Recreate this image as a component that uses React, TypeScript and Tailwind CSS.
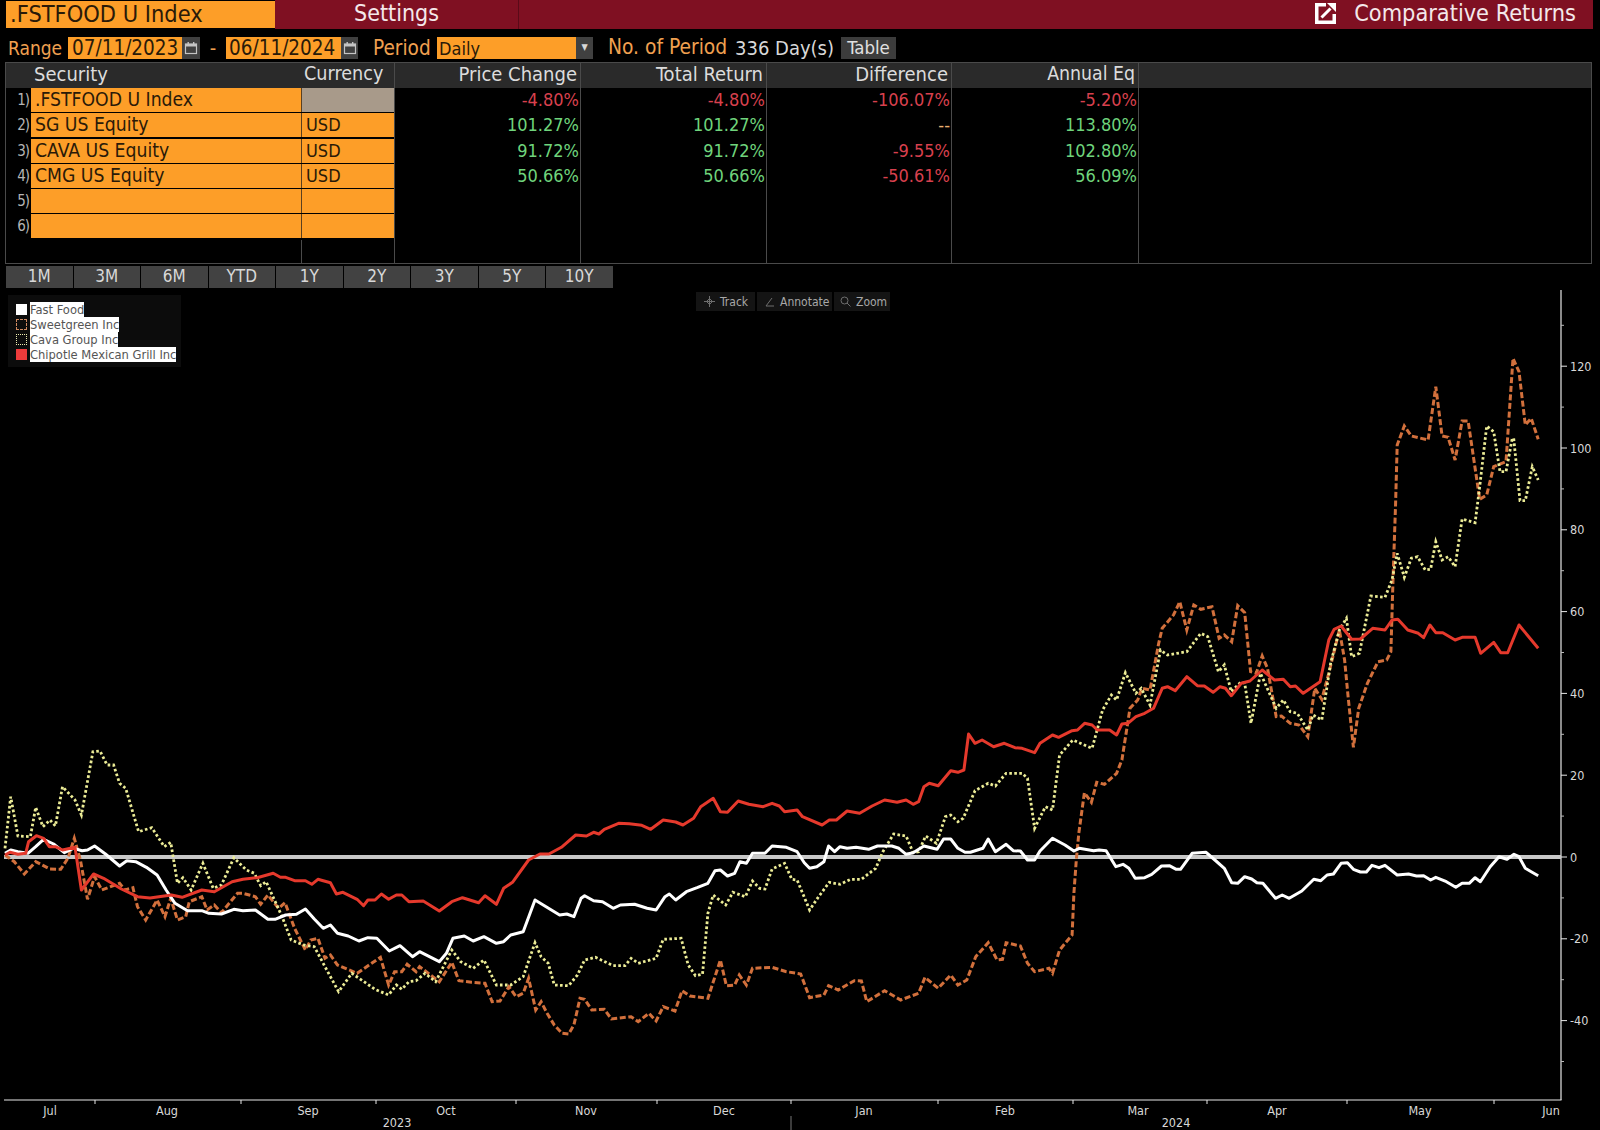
const FONT = "font-['DejaVu_Sans_Condensed','DejaVu_Sans',sans-serif]";

type Pt = [number, number];

// traced from the chart, each list in its own crop's units
const fromA = (pts: number[][]): Pt[] => pts.map(([x, y]) => [x / 2.8, 720 + y / 3]);
const fromB = (pts: number[][]): Pt[] => pts.map(([x, y]) => [540 + x / 2.8, 720 + y / 3]);
const fromC = (pts: number[][]): Pt[] => pts.map(([x, y]) => [1050 + x / 2.851, 340 + y / 3]);
const fromD = (pts: number[][]): Pt[] => pts.map(([x, y]) => [1050 + x / 2.851, 760 + y / 3]);

const WHITE: Pt[] = [
  ...fromA([[14,400],[30,390],[50,395],[78,400],[100,380],[122,358],[150,372],[180,398],[205,385],[230,392],[245,390],[265,378],[295,402],[335,438],[355,422],[380,425],[410,442],[440,465],[465,510],[490,550],[525,572],[565,572],[585,580],[620,582],[655,568],[680,572],[715,570],[750,598],[770,598],[800,585],[830,583],[855,567],[880,597],[905,625],[925,615],[945,640],[975,648],[1005,663],[1030,653],[1055,655],[1090,693],[1120,677],[1155,710],[1175,695],[1230,725],[1250,700],[1268,655],[1300,648],[1325,663],[1355,650],[1390,670],[1410,665],[1430,645],[1465,635],[1498,540]]),
  ...fromB([[55,585],[75,582],[95,590],[115,535],[125,527],[150,542],[175,545],[205,565],[225,555],[265,553],[300,565],[325,570],[350,530],[362,522],[380,540],[410,515],[440,503],[470,490],[490,452],[505,450],[525,468],[545,460],[560,425],[578,430],[595,400],[630,400],[650,378],[690,382],[720,395],[740,428],[755,445],[775,440],[795,425],[808,378],[825,395],[840,380],[860,385],[885,382],[920,388],[945,378],[985,378],[1005,385],[1025,403],[1045,398],[1075,378],[1112,388],[1130,357],[1150,357],[1170,385],[1190,397],[1205,397],[1240,385],[1255,357],[1275,395],[1305,373],[1325,392],[1345,393],[1365,420],[1385,420],[1400,393],[1435,355],[1470,375],[1495,393],[1510,385],[1550,392]]),
  ...fromD([[140,270],[160,272],[188,320],[208,313],[225,325],[243,355],[270,353],[290,343],[318,318],[340,317],[360,328],[372,328],[405,280],[445,277],[470,300],[497,325],[518,368],[535,370],[555,350],[575,357],[590,368],[607,370],[643,415],[662,405],[682,415],[718,393],[752,358],[772,362],[790,345],[808,342],[830,310],[848,308],[865,328],[885,336],[902,336],[918,316],[938,323],[955,316],[990,345],[1022,342],[1045,348],[1065,347],[1085,360],[1100,352],[1130,365],[1157,382],[1175,370],[1195,370],[1212,353],[1227,365],[1255,320],[1280,290],[1303,298],[1323,283],[1337,290],[1355,325],[1372,335],[1392,347]]),
];

const RED: Pt[] = [
  ...fromA([[14,405],[28,397],[50,403],[72,400],[80,365],[102,347],[122,355],[138,380],[155,380],[175,390],[210,382],[228,510],[262,462],[290,475],[340,507],[385,530],[420,534],[480,525],[510,532],[565,510],[600,515],[650,485],[680,478],[720,473],[765,460],[785,472],[800,472],[825,482],[855,482],[873,493],[890,478],[925,488],[942,522],[960,517],[1000,538],[1018,557],[1030,540],[1050,540],[1068,522],[1088,538],[1110,525],[1125,525],[1145,545],[1185,543],[1230,573],[1265,545],[1295,533],[1340,548],[1358,527],[1390,553],[1410,505],[1435,487],[1480,420]]),
  ...fromB([[0,402],[25,402],[60,382],[100,345],[130,348],[150,337],[165,342],[180,328],[220,310],[250,311],[285,316],[310,328],[345,300],[380,306],[400,315],[430,295],[450,260],[485,235],[505,275],[525,277],[555,243],[585,253],[625,260],[650,250],[670,258],[685,275],[720,270],[735,290],[790,315],[810,300],[830,300],[860,273],[895,280],[930,258],[965,240],[1000,247],[1025,240],[1045,253],[1060,245],[1075,200],[1090,190],[1115,197],[1150,152],[1170,157],[1187,150],[1200,42],[1218,70],[1238,60],[1270,80],[1300,70],[1330,83],[1350,85],[1385,98],[1400,70],[1435,45],[1452,52],[1490,32],[1505,30],[1525,10]]),
  ...fromC([[120,1155],[135,1170],[170,1170],[190,1185],[205,1152],[222,1150],[245,1130],[270,1120],[295,1105],[320,1045],[335,1040],[357,1052],[390,1010],[420,1037],[440,1038],[465,1057],[485,1040],[500,1045],[517,1067],[545,1030],[570,1023],[605,990],[640,1020],[665,1018],[685,1040],[700,1038],[722,1060],[770,1025],[795,900],[810,868],[830,858],[860,898],[885,897],[920,865],[955,870],[975,840],[992,838],[1020,870],[1050,880],[1065,893],[1083,855],[1100,878],[1120,878],[1155,900],[1175,892],[1212,892],[1228,940],[1265,907],[1285,938],[1305,938],[1337,855],[1392,925]]),
];

const ORANGE: Pt[] = [
  ...fromA([[14,405],[40,425],[68,462],[100,425],[140,447],[170,448],[190,415],[208,355],[225,420],[245,538],[265,470],[285,510],[335,490],[350,510],[372,503],[385,560],[408,600],[440,540],[462,590],[478,535],[497,600],[520,590],[530,545],[565,530],[580,570],[600,555],[620,578],[665,520],[680,520],[715,530],[730,553],[750,525],[780,565],[798,548],[825,625],[855,690],[870,660],[890,655],[910,715],[925,705],[945,735],[1000,760],[1065,712],[1088,795],[1105,755],[1125,755],[1140,733],[1165,755],[1175,740],[1230,785],[1265,727],[1285,782],[1320,787],[1358,790],[1378,845],[1400,843],[1425,800],[1445,830],[1465,820],[1480,775],[1500,870],[1515,845]]),
  ...fromB([[20,880],[40,915],[62,940],[80,942],[95,915],[112,835],[125,838],[145,870],[180,868],[200,897],[255,890],[275,905],[305,880],[325,903],[345,860],[378,873],[398,812],[420,828],[470,835],[505,720],[522,797],[545,795],[558,765],[578,795],[595,745],[650,742],[690,755],[730,762],[755,833],[795,825],[808,797],[835,810],[880,782],[900,783],[915,845],[965,812],[1010,840],[1060,820],[1078,772],[1115,805],[1150,765],[1170,795],[1195,780],[1220,710],[1255,668],[1280,720],[1295,718],[1305,668],[1345,678],[1365,730],[1385,755],[1425,745],[1435,760],[1455,690],[1490,645]]),
  ...fromD([[68,400],[75,300],[82,220],[98,98],[118,127],[133,67],[155,73],[190,40],[205,0]]),
  ...fromC([[228,1105],[250,1080],[262,1045],[285,1050],[310,910],[320,865],[352,825],[370,785],[390,870],[410,795],[430,808],[462,800],[482,895],[497,885],[518,905],[535,797],[555,818],[572,995],[588,1000],[605,948],[620,985],[645,1130],[660,1128],[685,1150],[710,1155],[735,1190],[755,1045],[775,1078],[795,1000],[825,870],[840,960],[850,1070],[865,1222],[880,1105],[905,1030],[935,965],[960,960],[972,935],[978,720],[985,500],[990,315],[1010,258],[1030,288],[1078,300],[1100,140],[1118,288],[1135,292],[1155,360],[1175,243],[1192,243],[1225,478],[1245,465],[1265,380],[1300,365],[1320,55],[1337,95],[1355,255],[1372,235],[1392,298]]),
];

const YELLOW: Pt[] = [
  ...fromA([[14,385],[30,230],[50,348],[85,350],[100,262],[120,320],[140,300],[155,318],[175,200],[210,240],[228,285],[260,95],[280,93],[300,135],[318,135],[335,190],[352,205],[388,335],[425,323],[460,380],[478,367],[497,490],[512,473],[535,510],[568,430],[597,505],[620,495],[655,413],[690,450],[712,460],[730,497],[745,485],[790,590],[815,660],[850,675],[880,680],[910,740],[948,815],[985,760],[1050,808],[1088,825],[1110,795],[1125,808],[1145,785],[1165,782],[1190,760],[1220,785],[1265,690],[1290,725],[1325,745],[1355,720],[1390,795],[1430,795],[1465,770],[1498,668],[1515,710],[1535,730],[1552,795]]),
  ...fromB([[40,795],[80,797],[105,765],[125,720],[155,712],[205,737],[238,737],[255,715],[275,730],[325,715],[345,658],[395,655],[415,735],[435,767],[455,763],[470,580],[485,525],[520,555],[540,517],[575,530],[595,483],[615,505],[630,507],[650,447],[685,430],[705,478],[720,480],[755,570],[780,530],[810,487],[840,493],[870,478],[900,478],[940,445],[960,395],[990,342],[1025,348],[1045,398],[1060,395],[1080,348],[1110,370],[1135,290],[1150,285],[1170,305],[1185,295],[1218,212],[1255,190],[1275,198],[1305,160],[1350,160],[1365,175],[1385,325],[1415,260],[1435,270],[1455,105]]),
  ...fromC([[65,1200],[120,1225],[150,1110],[175,1065],[190,1080],[215,998],[245,1060],[260,1045],[285,1095],[315,930],[335,945],[390,935],[430,880],[450,890],[480,995],[497,975],[517,1055],[545,1025],[555,1030],[573,1150],[600,1000],[645,1105],[665,1080],[685,1115],[705,1120],[735,1170],[750,1125],[775,1140],[800,970],[825,870],[845,835],[860,950],[882,940],[915,768],[955,772],[975,720],[990,640],[1010,712],[1030,655],[1048,650],[1070,690],[1085,688],[1100,605],[1118,660],[1135,650],[1155,680],[1175,537],[1212,548],[1225,440],[1245,258],[1265,275],[1283,395],[1300,395],[1318,295],[1322,295],[1340,482],[1355,482],[1375,380],[1392,420]]),
];

const CHART_TOP = 290;
const toLine = (pts: Pt[]) => pts.map(([x, y]) => `${x.toFixed(1)},${(y - CHART_TOP).toFixed(1)}`).join(' ');
const yOf = (v: number) => 857 - CHART_TOP - v * 4.09;

const MONTHS: [string, number][] = [
  ['Jul', 50], ['Aug', 167], ['Sep', 308], ['Oct', 446], ['Nov', 586], ['Dec', 724],
  ['Jan', 864], ['Feb', 1005], ['Mar', 1138], ['Apr', 1277], ['May', 1420], ['Jun', 1551],
];
const X_TICKS = [95, 241, 376, 516, 657, 791, 938, 1073, 1207, 1347, 1494];
const Y_LABELS = [120, 100, 80, 60, 40, 20, 0, -20, -40];
const Y_MINOR = [130, 110, 90, 70, 50, 30, 10, -10, -30, -50];

const ROWS = [
  { n: '1)', sec: '.FSTFOOD U Index', cur: '', price: '-4.80%', total: '-4.80%', diff: '-106.07%', eq: '-5.20%' },
  { n: '2)', sec: 'SG US Equity', cur: 'USD', price: '101.27%', total: '101.27%', diff: '--', eq: '113.80%' },
  { n: '3)', sec: 'CAVA US Equity', cur: 'USD', price: '91.72%', total: '91.72%', diff: '-9.55%', eq: '102.80%' },
  { n: '4)', sec: 'CMG US Equity', cur: 'USD', price: '50.66%', total: '50.66%', diff: '-50.61%', eq: '56.09%' },
  { n: '5)', sec: '', cur: '', price: '', total: '', diff: '', eq: '' },
  { n: '6)', sec: '', cur: '', price: '', total: '', diff: '', eq: '' },
];

const RANGES = ['1M', '3M', '6M', 'YTD', '1Y', '2Y', '3Y', '5Y', '10Y'];

const LEGEND = [
  { label: 'Fast Food', swatch: 'bg-white' },
  { label: 'Sweetgreen Inc', swatch: 'border border-dashed border-[#d08a60]' },
  { label: 'Cava Group Inc', swatch: 'border border-dotted border-[#eeeeb0]' },
  { label: 'Chipotle Mexican Grill Inc', swatch: 'bg-[#ee3b3b]' },
];

function valueColor(v: string) {
  if (v === '--') return 'text-[#e8b070]';
  return v.startsWith('-') ? 'text-[#d8404e]' : 'text-[#6fd47c]';
}

function CalendarButton({ width }: { width: string }) {
  return (
    <div className={`flex h-full items-center justify-center bg-[#404040] ${width}`}>
      <svg width="14" height="14" viewBox="0 0 14 14">
        <rect x="1.5" y="3" width="11" height="9.5" fill="none" stroke="#c4c4c4" strokeWidth="1.2" />
        <rect x="1.5" y="3" width="11" height="2.5" fill="#c4c4c4" />
        <rect x="3.5" y="1" width="1.4" height="2.5" fill="#c4c4c4" />
        <rect x="9" y="1" width="1.4" height="2.5" fill="#c4c4c4" />
      </svg>
    </div>
  );
}

function HeaderBar() {
  return (
    <div className="flex h-[29px] pl-[6px] pr-[7px]">
      <div className="mt-px flex h-[27px] w-[269px] items-center bg-[#fd9e28] pl-1 text-[23.4px] text-[#2a1a08]">
        .FSTFOOD U Index
      </div>
      <div className="flex flex-1 items-center bg-[#7f1022] text-[#f4e8ea]">
        <div className="flex h-full w-[244px] items-center justify-center border-r border-[#5a0a18] pb-[2px] text-[23px]">
          Settings
        </div>
        <div className="flex flex-1 items-center justify-end gap-[18px] pb-[2px] pr-[17px] text-[23.3px]">
          <svg width="21" height="21" viewBox="0 0 21 21" fill="none" stroke="#ffffff">
            <path d="M11 1.75H1.75V19.25H19.25V11" strokeWidth="3.5" />
            <path d="M6.5 14.5L15.5 5.5" strokeWidth="3" />
            <path d="M12 0H21V9Z" fill="#ffffff" stroke="none" />
          </svg>
          Comparative Returns
        </div>
      </div>
    </div>
  );
}

function RangeBar() {
  return (
    <div className="mt-[8px] flex h-[22px] items-center pl-[8px] text-[20px] text-[#f0a050]">
      <span className="w-[60px] text-[19px]">Range</span>
      <div className="flex h-full items-center">
        <div className="flex h-full w-[114px] items-center bg-[#fd9e28] pl-[4px] text-[20.5px] text-[#2a1a08]">07/11/2023</div>
        <CalendarButton width="w-[18px]" />
      </div>
      <span className="w-[26px] text-center">-</span>
      <div className="flex h-full items-center">
        <div className="flex h-full w-[115px] items-center bg-[#fd9e28] pl-[3px] text-[20.5px] text-[#2a1a08]">06/11/2024</div>
        <CalendarButton width="w-[17px]" />
      </div>
      <span className="ml-[15px] w-[64px] text-[20.6px]">Period</span>
      <div className="flex h-full w-[139px] items-center bg-[#fd9e28] pl-[2px] text-[18px] text-[#2a1a08]">Daily</div>
      <div className="flex h-full w-[17px] items-center justify-center bg-[#404040] text-[9px] text-[#d8d8d8]">▼</div>
      <span className="ml-[15px] w-[120px] whitespace-nowrap text-[20.8px]">No. of Period</span>
      <span className="w-[113px] whitespace-nowrap pl-[7px] text-[#d8d8d8]">336 Day(s)</span>
      <div className="flex h-full w-[55px] items-center justify-center bg-[#3c3c3c] text-[18.5px] text-[#e0e0e0]">Table</div>
    </div>
  );
}

function NumCell({ value, className }: { value: string; className: string }) {
  return <div className={`pr-[1px] text-right leading-[23px] ${className} ${valueColor(value)}`}>{value}</div>;
}

function ComparisonTable() {
  return (
    <div className="ml-[5px] mr-[8px] mt-[3px] flex h-[202px] flex-col border border-[#4a4a4a] text-[18px]">
      <div className="flex h-[25px] shrink-0 bg-[#2a2a2a] text-[20px] leading-[22px] text-[#dcdcdc]">
        <div className="w-[25px]" />
        <div className="w-[270px] pl-[3px]">Security</div>
        <div className="w-[94px] border-r border-[#4a4a4a] pl-[3px] text-[19.6px]">Currency</div>
        <div className="w-[186px] border-r border-[#4a4a4a] pr-[3px] text-right">Price Change</div>
        <div className="w-[186px] border-r border-[#4a4a4a] pr-[3px] text-right">Total Return</div>
        <div className="w-[185px] border-r border-[#4a4a4a] pr-[3px] text-right">Difference</div>
        <div className="w-[187px] border-r border-[#4a4a4a] pr-[3px] text-right text-[19.3px]">Annual Eq</div>
        <div className="flex-1" />
      </div>
      <div className="flex flex-1 flex-col">
        {ROWS.map((r, i) => (
          <div key={r.n} className="flex h-[25.3px] shrink-0 leading-[24px]">
            <div className="w-[25px] pr-[2px] text-right text-[15px] tracking-[-1px] text-[#b4b4b4]">{r.n}</div>
            <div className="h-[24px] w-[270px] whitespace-nowrap bg-[#fd9e28] pl-[4px] text-[19.2px] leading-[23px] text-[#2a1a08]">{r.sec}</div>
            <div
              className={`h-[24px] w-[93px] border-l border-[#5a4020] pl-[4px] leading-[23px] text-[#2a1a08] ${i === 0 ? 'bg-[#a89a8a]' : 'bg-[#fd9e28]'}`}
            >
              {r.cur}
            </div>
            <div className="w-px bg-[#4a4a4a]" />
            <NumCell value={r.price} className="w-[186px] border-r border-[#4a4a4a]" />
            <NumCell value={r.total} className="w-[186px] border-r border-[#4a4a4a]" />
            <NumCell value={r.diff} className="w-[185px] border-r border-[#4a4a4a]" />
            <NumCell value={r.eq} className="w-[187px] border-r border-[#4a4a4a]" />
          </div>
        ))}
        <div className="flex flex-1">
          <div className="w-[25px]" />
          <div className="w-[270px]" />
          <div className="w-[94px] border-x border-[#4a4a4a]" />
          <div className="w-[186px] border-r border-[#4a4a4a]" />
          <div className="w-[186px] border-r border-[#4a4a4a]" />
          <div className="w-[185px] border-r border-[#4a4a4a]" />
          <div className="w-[187px] border-r border-[#4a4a4a]" />
        </div>
      </div>
    </div>
  );
}

function RangeButtons() {
  return (
    <div className="ml-[6px] mt-[2px] flex h-[22px] gap-px">
      {RANGES.map((r) => (
        <div key={r} className="flex w-[66.5px] items-center justify-center bg-[#424242] text-[17px] text-[#d8d8d8]">
          {r}
        </div>
      ))}
    </div>
  );
}

function Legend() {
  return (
    <div className="absolute left-[8px] top-[5px] flex h-[72px] w-[173px] flex-col bg-[#0c0c0c] pl-[8px] pt-[7px]">
      {LEGEND.map((l) => (
        <div key={l.label} className="flex h-[15px] items-center gap-[3px]">
          <div className={`h-[11px] w-[11px] shrink-0 ${l.swatch}`} />
          <span className="bg-white text-[12.8px] leading-[15px] text-[#555555]">{l.label}</span>
        </div>
      ))}
    </div>
  );
}

function ChartTools() {
  return (
    <div className="absolute left-[696px] top-[2px] flex h-[19px] gap-[2px] text-[12px] text-[#a8a8a8]">
      <div className="flex w-[59px] items-center gap-[5px] bg-[#141414] pl-[8px]">
        <svg width="11" height="11" viewBox="0 0 11 11" fill="none" stroke="#6e6e6e">
          <path d="M5.5 0V11M0 5.5H11" />
          <path d="M5.5 2.5L8.5 5.5L5.5 8.5L2.5 5.5Z" />
        </svg>
        Track
      </div>
      <div className="flex w-[75px] items-center gap-[5px] bg-[#141414] pl-[8px]">
        <svg width="10" height="11" viewBox="0 0 10 11" fill="none" stroke="#6e6e6e">
          <path d="M1 10L7 2M1 10H9" />
        </svg>
        Annotate
      </div>
      <div className="flex w-[56px] items-center gap-[5px] bg-[#141414] pl-[6px]">
        <svg width="11" height="11" viewBox="0 0 11 11" fill="none" stroke="#6e6e6e">
          <circle cx="4.5" cy="4.5" r="3.5" />
          <path d="M7 7L10.5 10.5" />
        </svg>
        Zoom
      </div>
    </div>
  );
}

function Chart() {
  return (
    <div className="relative mt-[2px] h-[840px] w-full">
      <svg width="1600" height="840" viewBox="0 0 1600 840" className="block">
        <g fill="#d8d8d8" fontSize="12.5" fontFamily="'DejaVu Sans Condensed','DejaVu Sans',sans-serif">
          <line x1="1561" y1="0" x2="1561" y2="810" stroke="#e8e8e8" strokeWidth="1.2" />
          <line x1="4" y1="810" x2="1561.5" y2="810" stroke="#e8e8e8" strokeWidth="1.2" />
          {Y_LABELS.map((v) => (
            <g key={v}>
              <line x1="1561" y1={yOf(v)} x2="1567" y2={yOf(v)} stroke="#e8e8e8" />
              <text x="1570" y={yOf(v) + 4.5}>{v}</text>
            </g>
          ))}
          {Y_MINOR.map((v) => (
            <line key={v} x1="1561" y1={yOf(v)} x2="1564" y2={yOf(v)} stroke="#bbbbbb" />
          ))}
          {X_TICKS.map((x) => (
            <line key={x} x1={x} y1="810" x2={x} y2="814" stroke="#e8e8e8" />
          ))}
          {MONTHS.map(([m, x]) => (
            <text key={m} x={x} y="825" textAnchor="middle">{m}</text>
          ))}
          <text x="397" y="837" textAnchor="middle">2023</text>
          <text x="1176" y="837" textAnchor="middle">2024</text>
          <line x1="791" y1="826" x2="791" y2="840" stroke="#777777" />
        </g>
        <line x1="4" y1={yOf(0)} x2="1561" y2={yOf(0)} stroke="#c8c8c8" strokeWidth="4" />
        <polyline points={toLine(ORANGE)} fill="none" stroke="#d2703c" strokeWidth="3" strokeDasharray="6 2.6" />
        <polyline points={toLine(YELLOW)} fill="none" stroke="#ecec96" strokeWidth="2.8" strokeDasharray="2.6 2.4" />
        <polyline points={toLine(WHITE)} fill="none" stroke="#ffffff" strokeWidth="3" strokeLinejoin="round" />
        <polyline points={toLine(RED)} fill="none" stroke="#e5392c" strokeWidth="3" strokeLinejoin="round" />
      </svg>
      <Legend />
      <ChartTools />
    </div>
  );
}

export default function App() {
  return (
    <div className={`h-[1130px] w-[1600px] overflow-hidden bg-black ${FONT}`}>
      <HeaderBar />
      <RangeBar />
      <ComparisonTable />
      <RangeButtons />
      <Chart />
    </div>
  );
}
